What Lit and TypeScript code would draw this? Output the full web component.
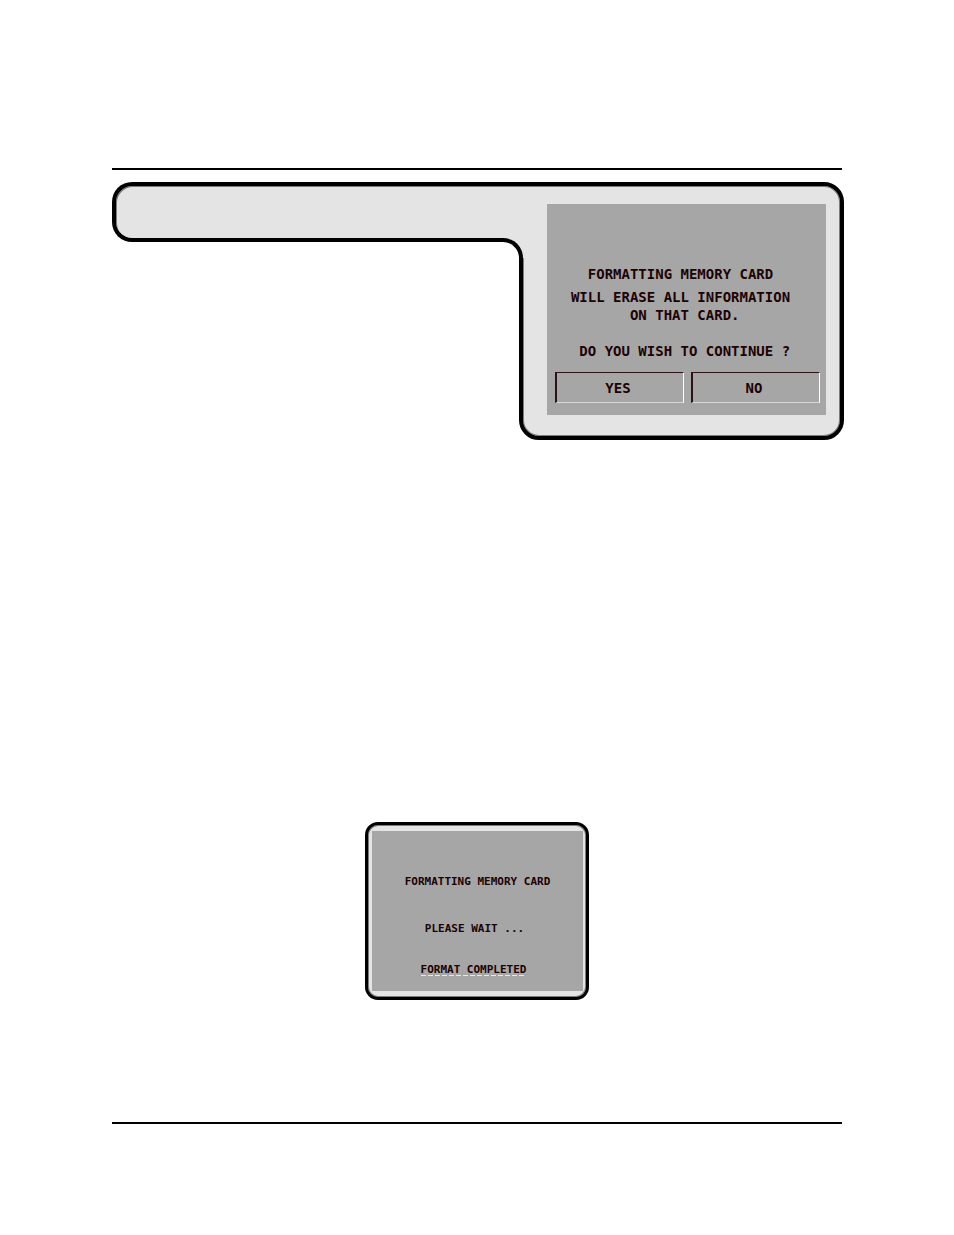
import { LitElement, html, css } from "lit";
import { customElement } from "lit/decorators.js";

@customElement("app-root")
export class AppRoot extends LitElement {
  static styles = css`
    :host {
      display: block;
      background: #fff;
      color: #1c0202;
      font-family: "DejaVu Sans Mono", monospace;
      --shell: #e4e4e4;
      --screen: #a6a6a6;
      --edge: #7c7c7c;
    }
    * {
      box-sizing: border-box;
    }
    .page {
      max-width: 730px;
      margin: 0 auto;
      padding: 168px 0 111px;
    }
    .rule {
      height: 2px;
      margin: 0;
      border: 0;
      background: #000;
    }
    .device {
      display: grid;
      grid-template-columns: minmax(0, 1fr) 4px 321px;
      grid-template-rows: 60px auto;
      margin: 12px -2px 0 0;
    }
    .body {
      grid-area: 1 / 2 / 3 / 4;
      padding: 18px 14px 21px 24px;
      border: 4px solid #000;
      border-radius: 0 20px 20px 20px;
      background: var(--shell);
      box-shadow: inset 0 0 0 1px var(--edge);
    }
    .arm {
      grid-area: 1 / 1 / 2 / 3;
      margin-right: -1px;
      border: 4px solid #000;
      border-right: 0;
      border-radius: 20px 0 0 20px;
      background: var(--shell);
      box-shadow: inset 1px 1px 0 var(--edge);
    }
    .elbow {
      grid-area: 1 / 1 / 3 / 3;
      justify-self: end;
      width: 21px;
      height: 20px;
      margin: 56px -1px 0 0;
      background: var(--shell);
    }
    .elbow::before {
      content: "";
      display: block;
      width: 20px;
      height: 100%;
      box-sizing: border-box;
      border: solid #000;
      border-width: 4px 4px 0 0;
      border-top-right-radius: 20px;
      background: #fff;
    }
    .screen {
      background: var(--screen);
      font-weight: bold;
      text-align: center;
    }
    .prompt {
      height: 211px;
      padding: 61px 6px 0 8px;
      font-size: 14px;
      line-height: 18px;
    }
    .line {
      margin: 0;
      padding-right: 14px;
      white-space: pre;
    }
    .warning {
      margin-top: 5px;
    }
    .question {
      margin-top: 18px;
    }
    .actions {
      display: grid;
      grid-template-columns: 1fr 1fr;
      gap: 7px;
      margin-top: 12px;
    }
    button {
      height: 31px;
      padding: 0 4px 0 0;
      border: 1px solid;
      border-left-width: 2px;
      border-color: #2c1214 #fff #d8d8d8 #2c1214;
      background: none;
      color: inherit;
      font: bold 14px/18px "DejaVu Sans Mono", monospace;
    }
    .status {
      width: 224px;
      margin: 382px auto 122px;
      padding: 6px 3px 6px 4px;
      border: 3px solid #000;
      border-radius: 13px;
      background: var(--shell);
      box-shadow: inset 0 0 0 1px var(--edge);
    }
    .progress {
      height: 160px;
      padding-top: 44px;
      font-size: 11px;
      line-height: 14px;
    }
    .progress p {
      margin: 0;
    }
    .progress .wait {
      margin: 33px 6px 27px 0;
    }
    .progress .done {
      width: fit-content;
      margin: 0 auto;
      background: repeating-linear-gradient(90deg, #ffff3c 0 5px, transparent 5px 7px)
        0 12px / 100% 1px no-repeat;
    }
    .progress .shift {
      padding-right: 8px;
    }
  `;

  render() {
    return html`
      <main class="page">
        <hr class="rule" />
        <section class="device">
          <div class="body">
            <div class="screen prompt">
              <p class="line">FORMATTING MEMORY CARD</p>
              <p class="line warning">WILL ERASE ALL INFORMATION</p>
              <p class="line"> ON THAT CARD.</p>
              <p class="line question"> DO YOU WISH TO CONTINUE ?</p>
              <div class="actions">
                <button type="button">YES</button>
                <button type="button">NO</button>
              </div>
            </div>
          </div>
          <div class="arm"></div>
          <div class="elbow"></div>
        </section>
        <section class="status">
          <div class="screen progress">
            <p>FORMATTING MEMORY CARD</p>
            <p class="wait">PLEASE WAIT ...</p>
            <div class="shift"><p class="done">FORMAT COMPLETED</p></div>
          </div>
        </section>
        <hr class="rule" />
      </main>
    `;
  }
}
